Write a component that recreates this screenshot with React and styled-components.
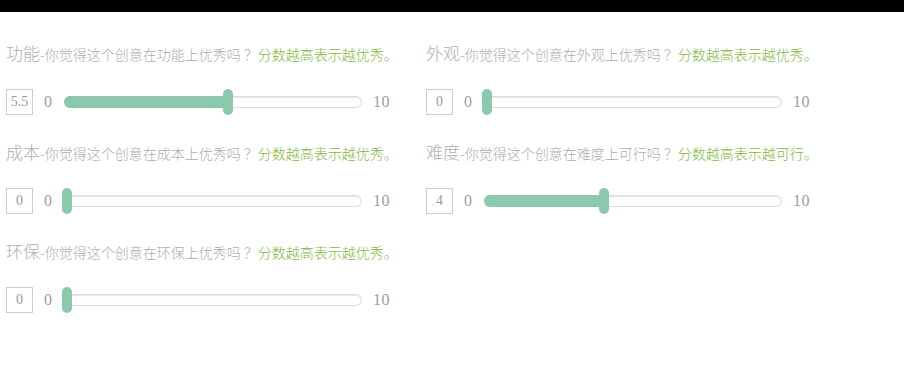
import React from "react";
import styled, { createGlobalStyle } from "styled-components";

const Global = createGlobalStyle`
  html, body { margin: 0; padding: 0; background: #fff; }
  body { font-family: "Noto Sans CJK SC", "Noto Sans", sans-serif; }
`;

const TopBar = styled.div`
  height: 12px;
  background: #000;
`;

const Grid = styled.div`
  display: grid;
  grid-template-columns: 420px 420px;
  padding: 4px 0 0 6px;
`;

const Item = styled.div`
  height: 99px;
  padding-top: 27px;
  box-sizing: border-box;
`;

const Title = styled.div`
  height: 20px;
  line-height: 20px;
  white-space: nowrap;
  color: #acacac;
  font-size: 14px;
  font-weight: 300;
`;

const Name = styled.span`
  font-size: 17px;
  color: #aeaeae;
  font-weight: 300;
`;

const Mark = styled.span`
  display: inline-block;
  padding-left: 3px;
`;

const Hint = styled.span`
  color: #80b83c;
`;

const Row = styled.div`
  display: flex;
  align-items: center;
  height: 26px;
  margin-top: 26px;
`;

const ValueBox = styled.div`
  width: 25px;
  height: 24px;
  border: 1px solid #ccc;
  display: flex;
  align-items: center;
  justify-content: center;
  font-family: "Liberation Serif", "DejaVu Serif", serif;
  font-size: 14px;
  color: #999;
  margin-right: 11px;
`;

const EndLabel = styled.span`
  font-family: "Liberation Serif", "DejaVu Serif", serif;
  font-size: 16px;
  letter-spacing: 0.5px;
  color: #a09b99;
  width: ${(p) => p.$w}px;
`;

const Track = styled.div`
  position: relative;
  width: 298px;
  height: 12px;
  box-sizing: border-box;
  border: 1px solid #ddd;
  border-left: none;
  border-radius: 6px;
  box-shadow: inset 0 1px 1px #e6e6e6;
  margin: 0 11px 0 12px;
`;

const Fill = styled.div`
  position: absolute;
  left: 0;
  top: -1px;
  height: 12px;
  background: #8cc8ac;
  border-radius: 6px 0 0 6px;
`;

const Thumb = styled.div`
  position: absolute;
  top: -8px;
  width: 10px;
  height: 26px;
  border-radius: 5px;
  background: #8cc8ac;
`;

const items = [
  { name: "功能", q: "你觉得这个创意在功能上优秀吗", hint: "分数越高表示越优秀。", v: 5.5, label: "5.5" },
  { name: "外观", q: "你觉得这个创意在外观上优秀吗", hint: "分数越高表示越优秀。", v: 0, label: "0" },
  { name: "成本", q: "你觉得这个创意在成本上优秀吗", hint: "分数越高表示越优秀。", v: 0, label: "0" },
  { name: "难度", q: "你觉得这个创意在难度上可行吗", hint: "分数越高表示越可行。", v: 4, label: "4" },
  { name: "环保", q: "你觉得这个创意在环保上优秀吗", hint: "分数越高表示越优秀。", v: 0, label: "0" },
];

function Slider({ v }) {
  const left = -2 + (v / 10) * 292;
  return (
    <Track>
      <Fill style={{ width: left + 5 }} />
      <Thumb style={{ left }} />
    </Track>
  );
}

export default function App() {
  return (
    <>
      <Global />
      <TopBar />
      <Grid>
        {items.map((it) => (
          <Item key={it.name}>
            <Title>
              <Name>{it.name}</Name>-{it.q}
              <Mark>？</Mark>
              <Hint>{it.hint}</Hint>
            </Title>
            <Row>
              <ValueBox>{it.label}</ValueBox>
              <EndLabel $w={8}>0</EndLabel>
              <Slider v={it.v} />
              <EndLabel>10</EndLabel>
            </Row>
          </Item>
        ))}
      </Grid>
    </>
  );
}
